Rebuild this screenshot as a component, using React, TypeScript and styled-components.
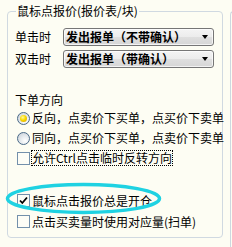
import React from "react";
import styled, { createGlobalStyle } from "styled-components";

const Global = createGlobalStyle`
  html, body { margin: 0; padding: 0; background: #fdfdf3; }
  body {
    width: 232px; height: 247px; overflow: hidden;
    font-family: "Noto Sans CJK SC", "Noto Sans", sans-serif;
    font-size: 12px; color: #000;
  }
`;

const Page = styled.div`
  position: relative;
  display: flex;
  align-items: flex-start;
  height: 247px;
  overflow: hidden;
`;

const Group = styled.fieldset`
  flex-shrink: 0;
  box-sizing: border-box;
  margin: 4px 0 0 7px;
  width: 216px;
  height: 234px;
  border: 1px solid #d0d9e1;
  border-radius: 4px;
  padding: 0 0 0 7px;
  min-width: 0;
  display: flex;
  flex-direction: column;
`;

const Legend = styled.legend`
  padding: 0 1px;
  margin-left: 1px;
  line-height: 14px;
  font-size: 12px;
  white-space: nowrap;
`;

const ComboRow = styled.div<{ $top: number }>`
  display: flex;
  align-items: center;
  height: 18px;
  margin-top: ${(p) => p.$top}px;
`;

const RowLabel = styled.span`
  width: 48px;
  line-height: 14px;
  white-space: nowrap;
`;

const Combo = styled.div`
  box-sizing: border-box;
  width: 151px;
  height: 18px;
  border: 1px solid #767676;
  border-radius: 3px;
  background: linear-gradient(#f4f4f4 0%, #ececec 50%, #dfdfdf 51%, #d6d6d6 100%);
  box-shadow: inset 0 0 0 1px rgba(255, 255, 255, 0.7);
  display: flex;
  align-items: center;
  padding: 0 5px 0 2px;
  font-weight: 700;
  font-size: 12px;
  line-height: 14px;
  white-space: nowrap;
`;

const ComboText = styled.span`
  flex: 1;
`;

const Arrow = styled.span`
  width: 0;
  height: 0;
  border-left: 3.5px solid transparent;
  border-right: 3.5px solid transparent;
  border-top: 4px solid #000;
`;

const SectionLabel = styled.div`
  margin-top: 25px;
  line-height: 14px;
`;

const Option = styled.label<{ $top: number; $h: number }>`
  display: flex;
  align-items: center;
  height: ${(p) => p.$h}px;
  margin-top: ${(p) => p.$top}px;
  padding-left: 2px;
  white-space: nowrap;
  line-height: 14px;
`;

const Radio = styled.span<{ $on?: boolean }>`
  box-sizing: border-box;
  flex-shrink: 0;
  width: 13px;
  height: 13px;
  border-radius: 50%;
  border: 1px solid #4a6a88;
  background: radial-gradient(circle at 65% 70%, #ffffff 0%, #e8ecef 40%, #c4ccd4 100%);
  margin-right: 2px;
  display: flex;
  align-items: center;
  justify-content: center;
  &::after {
    content: "";
    display: ${(p) => (p.$on ? "block" : "none")};
    width: 7px;
    height: 7px;
    border-radius: 50%;
    background: radial-gradient(circle at 40% 35%, #fff9a0 0%, #f7d800 45%, #d99a00 100%);
  }
`;

const Box = styled.span`
  box-sizing: border-box;
  flex-shrink: 0;
  width: 13px;
  height: 13px;
  border: 1px solid #7390ab;
  background: #fdfdf6;
  margin-right: 2px;
  display: flex;
  align-items: center;
  justify-content: center;
`;

const Focused = styled.span`
  outline: 1px dotted #000;
  outline-offset: 0;
`;

const RightPanel = styled.div`
  flex-shrink: 0;
  margin: 11px 0 0 7px;
  width: 10px;
  height: 240px;
  border-left: 1px solid #cdd8e0;
  border-top: 1px solid #cdd8e0;
  border-top-left-radius: 4px;
`;

const Mark = styled.svg`
  position: absolute;
  left: 0;
  top: 0;
  pointer-events: none;
`;

const Check = () => (
  <svg width="9" height="9" viewBox="0 0 9 9">
    <path d="M1 4.5 L3.3 7 L8 1.5" fill="none" stroke="#000" strokeWidth="1.8" />
  </svg>
);

export default function App() {
  return (
    <>
      <Global />
      <Page>
        <Group>
          <Legend>鼠标点报价(报价表/块)</Legend>
          <ComboRow $top={10}>
            <RowLabel>单击时</RowLabel>
            <Combo>
              <ComboText>发出报单（不带确认）</ComboText>
              <Arrow />
            </Combo>
          </ComboRow>
          <ComboRow $top={4}>
            <RowLabel>双击时</RowLabel>
            <Combo>
              <ComboText>发出报单（带确认）</ComboText>
              <Arrow />
            </Combo>
          </ComboRow>
          <SectionLabel>下单方向</SectionLabel>
          <Option $top={1} $h={20}>
            <Radio $on />
            反向，点卖价下买单，点买价下卖单
          </Option>
          <Option $top={0} $h={20}>
            <Radio />
            同向，点买价下买单，点卖价下卖单
          </Option>
          <Option $top={0} $h={20}>
            <Box />
            <Focused>允许Ctrl点击临时反转方向</Focused>
          </Option>
          <Option $top={22} $h={21}>
            <Box>
              <Check />
            </Box>
            鼠标点击报价总是开仓
          </Option>
          <Option $top={0} $h={21}>
            <Box />
            点击买卖量时使用对应量(扫单)
          </Option>
        </Group>
        <RightPanel />
        <Mark width="232" height="247">
          <ellipse cx="83.5" cy="198.5" rx="76" ry="14" fill="none" stroke="#1fd2e2" strokeWidth="3.5" />
        </Mark>
      </Page>
    </>
  );
}
